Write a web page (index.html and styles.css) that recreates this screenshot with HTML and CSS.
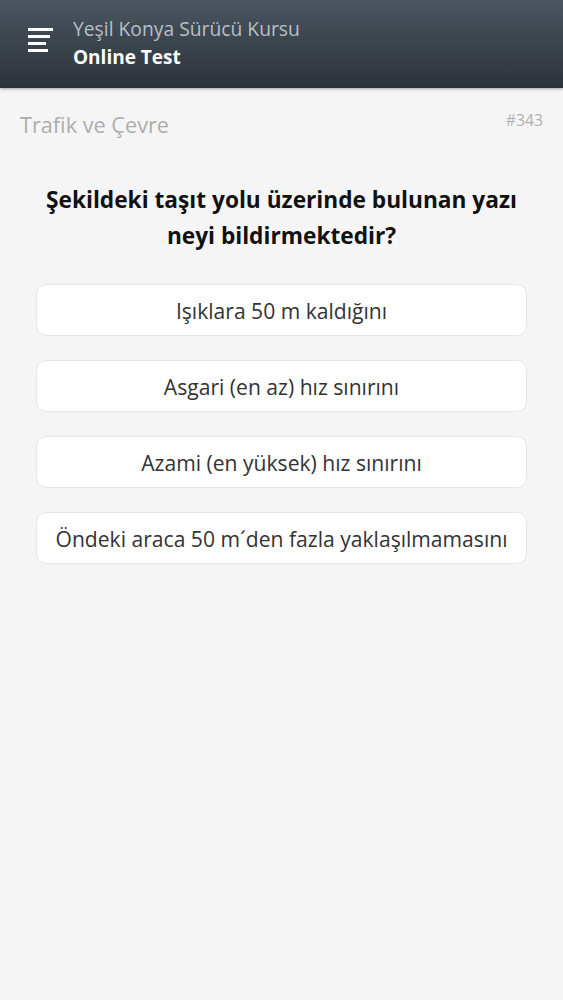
FILE: index.html
```html
<!DOCTYPE html>
<html lang="tr">
<head>
<meta charset="utf-8">
<link rel="stylesheet" href="styles.css">
</head>
<body>
<header class="topbar">
  <div class="menu-icon">
    <span class="l1"></span><span class="l2"></span><span class="l3"></span><span class="l4"></span>
  </div>
  <div class="titles">
    <div class="subtitle">Yeşil Konya Sürücü Kursu</div>
    <div class="title">Online Test</div>
  </div>
</header>
<main class="content">
  <div class="meta">
    <div class="category">Trafik ve Çevre</div>
    <div class="qnum">#343</div>
  </div>
  <h1 class="question">Şekildeki taşıt yolu üzerinde bulunan yazı neyi bildirmektedir?</h1>
  <div class="options">
    <div class="option">Işıklara 50 m kaldığını</div>
    <div class="option">Asgari (en az) hız sınırını</div>
    <div class="option">Azami (en yüksek) hız sınırını</div>
    <div class="option">Öndeki araca 50 m´den fazla yaklaşılmamasını</div>
  </div>
</main>
</body>
</html>
```
FILE: styles.css
```css
html, body {
  margin: 0;
  padding: 0;
}
body {
  background: #f5f5f6;
  font-family: "Open Sans", Lato, sans-serif;
  width: 563px;
  min-height: 1000px;
}
.topbar {
  height: 88px;
  background: linear-gradient(#4b5660, #2c323a);
  box-shadow: 0 1px 3px rgba(0,0,0,0.35);
  display: flex;
  align-items: flex-start;
  box-sizing: border-box;
  padding: 28px 0 0 28px;
}
.menu-icon {
  width: 25px;
  display: flex;
  flex-direction: column;
  gap: 4px;
}
.menu-icon span {
  display: block;
  height: 3px;
  background: #ffffff;
}
.menu-icon .l1 { width: 25px; }
.menu-icon .l2 { width: 22px; }
.menu-icon .l3 { width: 18px; }
.menu-icon .l4 { width: 20px; }
.titles {
  margin-left: 20px;
  margin-top: -13px;
}
.subtitle {
  color: #b9bfc6;
  font-size: 19.3px;
  line-height: 28px;
}
.title {
  color: #ffffff;
  font-size: 19px;
  font-weight: 700;
  line-height: 28px;
}
.content {
  padding: 22px 20px 0 20px;
}
.meta {
  display: flex;
  justify-content: space-between;
  align-items: flex-start;
}
.category {
  color: #adadad;
  font-size: 21.7px;
  line-height: 30px;
}
.qnum {
  color: #b0b0b0;
  font-size: 15.8px;
  line-height: 20px;
}
.question {
  margin: 42px 0 0 0;
  text-align: center;
  font-size: 22.7px;
  line-height: 36px;
  font-weight: 700;
  color: #111111;
}
.options {
  margin: 30px 16px 0 16px;
  display: flex;
  flex-direction: column;
  gap: 24px;
}
.option {
  background: #ffffff;
  border: 1px solid #e6e6e8;
  border-radius: 10px;
  height: 52px;
  box-sizing: border-box;
  display: flex;
  align-items: center;
  justify-content: center;
  font-size: 21.1px;
  color: #333333;
}
```
